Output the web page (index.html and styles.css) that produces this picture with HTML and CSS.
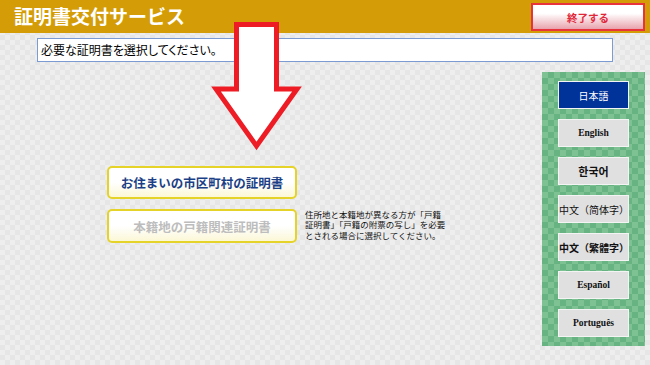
FILE: index.html
```html
<!DOCTYPE html>
<html lang="ja">
<head>
<meta charset="utf-8">
<title>証明書交付サービス</title>
<link rel="stylesheet" href="styles.css">
</head>
<body>
<div class="screen">
  <header class="topbar">
    <h1 class="title">証明書交付サービス</h1>
    <button class="exit">終了する</button>
  </header>
  <div class="prompt">必要な証明書を選択してください。</div>
  <div class="content">
    <section class="choices">
      <button class="cert primary">お住まいの市区町村の証明書</button>
      <div class="row">
        <button class="cert disabled">本籍地の戸籍関連証明書</button>
        <p class="note"><span class="line">住所地と本籍地が異なる方が「戸籍</span><span class="line">証明書」「戸籍の附票の写し」を必要</span><span class="line">とされる場合に選択してください。</span></p>
      </div>
    </section>
    <nav class="langs">
      <button class="lang active ja">日本語</button>
      <button class="lang serif-bold">English</button>
      <button class="lang ko">한국어</button>
      <button class="lang zh">中文（简体字）</button>
      <button class="lang zh bold">中文（繁體字）</button>
      <button class="lang serif-bold">Español</button>
      <button class="lang serif-bold">Português</button>
    </nav>
  </div>
  <svg class="arrow" viewBox="205 15 110 145" width="110" height="145" aria-hidden="true">
    <polygon points="236.5,24.5 276.5,24.5 276.5,89 297,89 256.5,146 216,89 236.5,89" fill="#ffffff" stroke="#ee1c25" stroke-width="5" stroke-linejoin="miter"/>
  </svg>
</div>
</body>
</html>
```

FILE: styles.css
```css
html, body {
  margin: 0;
  padding: 0;
}

body {
  width: 650px;
  height: 365px;
  overflow: hidden;
  font-family: "Noto Sans CJK JP", "Noto Sans", sans-serif;
  background: repeating-conic-gradient(#e6e6e6 0 25%, #eeeeee 0 50%) 0 0 / 10px 10px;
}

.screen {
  position: relative;
  width: 650px;
  height: 365px;
}

.topbar {
  height: 33px;
  background: #d49d07;
  display: flex;
  justify-content: space-between;
  align-items: flex-start;
}

.title {
  margin: 0;
  padding-left: 14px;
  font-size: 19px;
  line-height: 31px;
  font-weight: 700;
  color: #ffffff;
}

.exit {
  margin: 3px 5px 0 0;
  width: 114px;
  height: 28px;
  box-sizing: border-box;
  border: 2px solid #e8323c;
  background: linear-gradient(#ffffff 0%, #ffffff 35%, #e9a3ad 100%);
  color: #e0283a;
  font-family: "Noto Sans CJK JP", sans-serif;
  font-weight: 700;
  font-size: 10.5px;
  padding: 0;
}

.prompt {
  margin: 5px 0 0 37px;
  width: 576px;
  height: 24px;
  box-sizing: border-box;
  border: 1px solid #7d9bd3;
  background: #ffffff;
  font-size: 12px;
  line-height: 22px;
  padding-left: 3px;
  color: #000000;
  font-feature-settings: "palt";
}

.content {
  display: flex;
  margin-top: 10px;
}

.choices {
  flex: 1;
  padding: 94px 0 0 107px;
  display: flex;
  flex-direction: column;
  align-items: flex-start;
  gap: 10px;
}

.cert {
  width: 190px;
  height: 33px;
  box-sizing: border-box;
  border: 2px solid #e5d32a;
  border-radius: 5px;
  background: linear-gradient(#ffffff 50%, #fbf7d6 100%);
  font-family: "Noto Sans CJK JP", sans-serif;
  font-weight: 700;
  font-size: 12.5px;
  padding: 0;
}

.cert.primary {
  color: #1b3f86;
}

.cert.disabled {
  height: 34px;
  color: #bdbdbd;
}

.row {
  display: flex;
  align-items: flex-start;
  gap: 8px;
}

.note {
  margin: 0;
  display: flex;
  flex-direction: column;
  font-size: 8.5px;
  color: #111111;
  white-space: nowrap;
}

.line {
  display: block;
  height: 10.3px;
  line-height: 10.3px;
}

.langs {
  width: 103px;
  height: 274px;
  box-sizing: border-box;
  padding: 9px 16px 0;
  margin-right: 5px;
  display: flex;
  flex-direction: column;
  gap: 10px;
  background: repeating-conic-gradient(#68b382 0 25%, #7ec294 0 50%) 0 0 / 12px 12px;
}

.lang {
  height: 28px;
  width: 71px;
  box-sizing: border-box;
  border: 1px solid #f4f4f4;
  background: #e0e0e0;
  color: #111111;
  padding: 0;
  font-size: 10px;
  white-space: nowrap;
}

.lang.active {
  background: #003399;
  color: #ffffff;
}

.ja {
  font-family: "Noto Sans CJK JP", sans-serif;
  font-size: 10px;
}

.serif-bold {
  font-family: "Liberation Serif", serif;
  font-weight: 700;
  font-size: 9.5px;
}

.ko {
  font-family: "Noto Sans CJK KR", sans-serif;
  font-weight: 700;
  font-size: 11px;
}

.zh {
  font-family: "Noto Sans CJK SC", sans-serif;
  font-size: 10px;
}

.zh.bold {
  font-family: "Noto Sans CJK TC", sans-serif;
  font-weight: 700;
}

.arrow {
  position: absolute;
  left: 205px;
  top: 15px;
  pointer-events: none;
}
```
